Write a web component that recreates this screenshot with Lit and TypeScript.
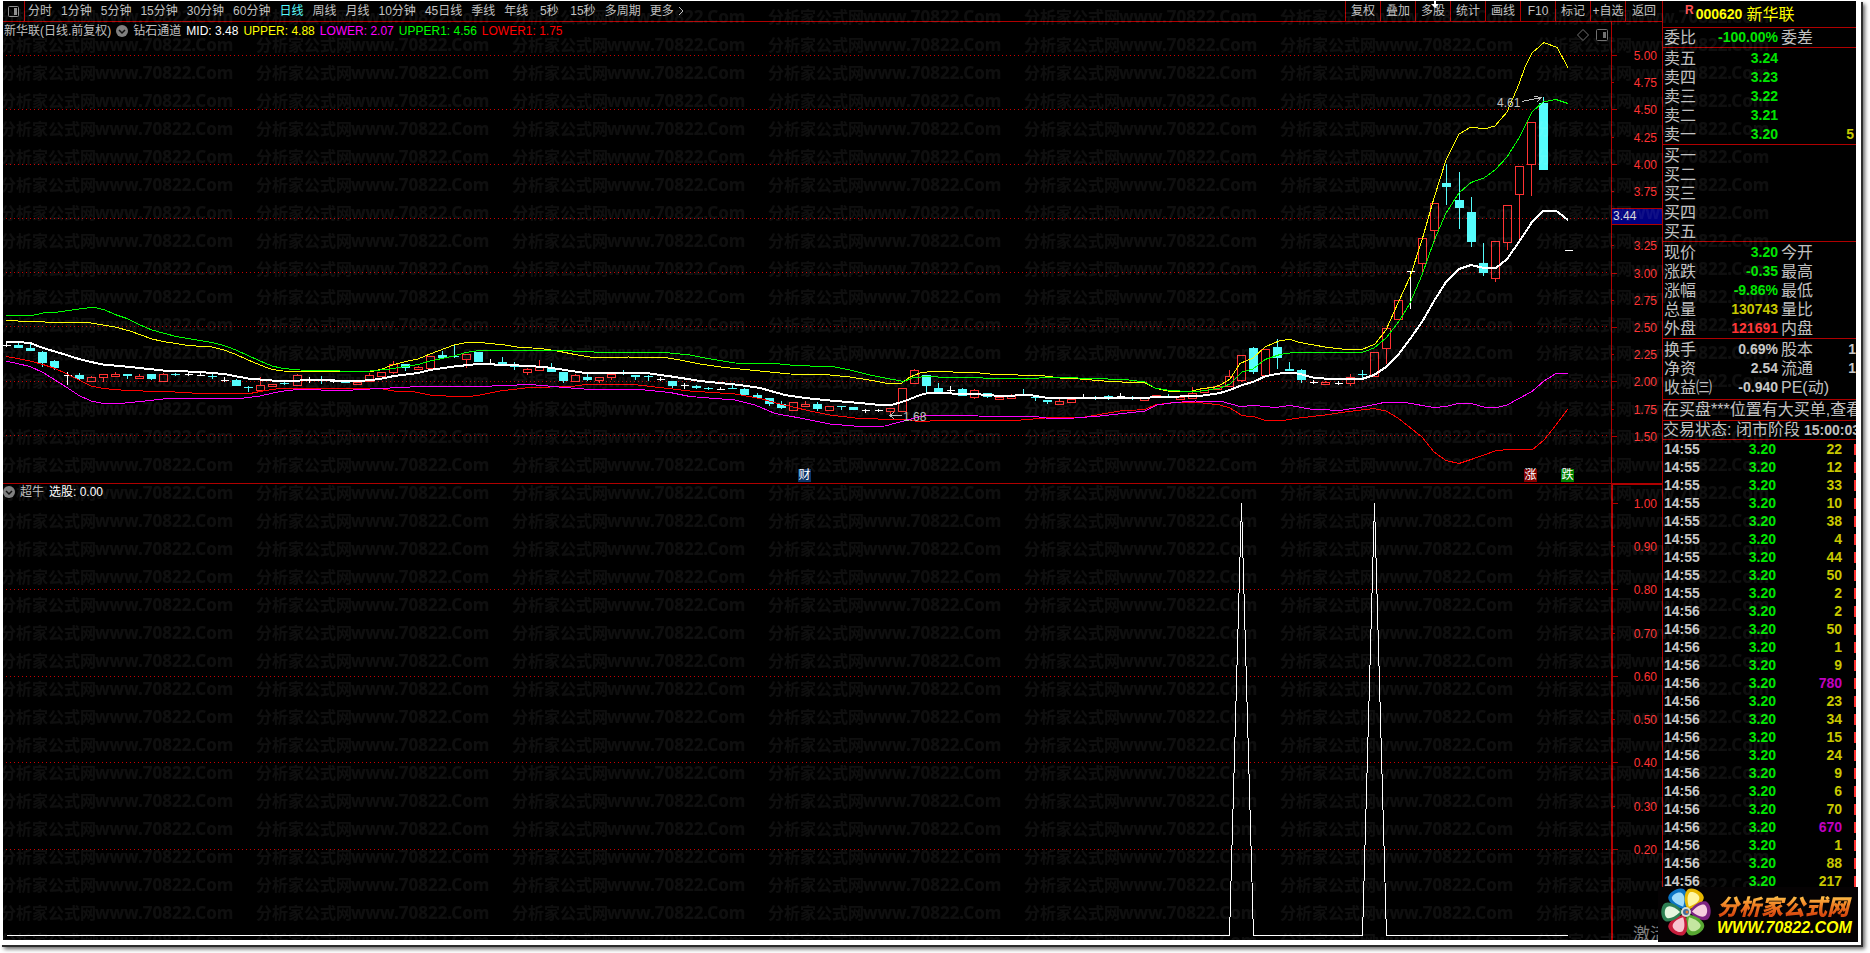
import { LitElement, html, svg, css } from "lit";
import { customElement } from "lit/decorators.js";
import { styleMap } from "lit/directives/style-map.js";
import { classMap } from "lit/directives/class-map.js";

/* Price pane drawing space: x 3..1611, y 22..483. Indicator pane: y 484..940. */
const X0 = 3;
const W = 1608;
const PRICE_TOP = 22;
const PRICE_H = 461;
const IND_TOP = 484;
const IND_H = 456;

const barX = (i: number) => Math.round(6 + 12.105 * i) + 0.5;

/* [bar, kind, high, bodyTop, bodyBottom, low]; kind: r rising, c falling, w unchanged */
type Bar = [number, "r" | "c" | "w", number, number, number, number];
const BARS: Bar[] = [
  [0, "w", 341, 345, 345, 347], [1, "c", 343, 345, 348, 348], [2, "c", 344, 348, 351, 351],
  [3, "c", 351, 352, 363, 367], [4, "c", 360, 361, 368, 370], [5, "w", 372, 375, 375, 385],
  [6, "c", 373, 375, 379, 381], [7, "r", 376, 377, 381, 381], [8, "r", 374, 374, 377, 382],
  [9, "r", 372, 374, 376, 377], [10, "c", 374, 374, 376, 379], [11, "r", 374, 376, 378, 379],
  [12, "c", 374, 374, 379, 380], [13, "r", 373, 374, 381, 381], [14, "c", 373, 374, 375, 376],
  [15, "w", 371, 374, 374, 376], [16, "w", 372, 375, 375, 376], [17, "c", 373, 376, 377, 379],
  [18, "w", 377, 380, 380, 382], [19, "c", 379, 380, 386, 386], [20, "c", 386, 387, 388, 392],
  [21, "r", 377, 385, 390, 390], [22, "r", 384, 384, 386, 387], [23, "c", 381, 383, 384, 385],
  [24, "r", 374, 375, 385, 386], [25, "w", 377, 379, 379, 383], [26, "c", 376, 380, 381, 384],
  [27, "w", 380, 381, 381, 383], [28, "c", 382, 382, 383, 383], [29, "r", 382, 382, 384, 385],
  [30, "r", 373, 375, 381, 381], [31, "r", 372, 372, 376, 376], [32, "r", 361, 364, 372, 374],
  [33, "c", 364, 364, 368, 371], [34, "r", 366, 367, 369, 369], [35, "r", 356, 356, 368, 368],
  [36, "c", 351, 355, 358, 358], [37, "c", 345, 356, 357, 358], [38, "r", 354, 354, 359, 368],
  [39, "c", 352, 352, 362, 362], [40, "w", 359, 363, 363, 365], [41, "c", 357, 362, 364, 364],
  [42, "c", 362, 366, 367, 370], [43, "r", 368, 369, 372, 375], [44, "r", 360, 366, 370, 370],
  [45, "c", 363, 368, 372, 372], [46, "c", 372, 372, 381, 383], [47, "r", 374, 375, 381, 381],
  [48, "c", 374, 377, 380, 381], [49, "r", 377, 377, 380, 383], [50, "r", 374, 374, 377, 380],
  [51, "c", 370, 373, 374, 375], [52, "c", 375, 375, 377, 380], [53, "c", 375, 376, 377, 381],
  [54, "w", 377, 379, 379, 381], [55, "c", 381, 381, 386, 388], [56, "w", 383, 385, 385, 389],
  [57, "c", 385, 386, 388, 389], [58, "c", 387, 388, 389, 390], [59, "w", 387, 389, 389, 390],
  [60, "c", 385, 388, 389, 389], [61, "c", 388, 389, 395, 396], [62, "c", 393, 395, 398, 399],
  [63, "c", 398, 398, 404, 406], [64, "c", 401, 404, 408, 409], [65, "r", 402, 402, 410, 410],
  [66, "r", 401, 404, 406, 406], [67, "c", 402, 404, 409, 411], [68, "r", 406, 406, 410, 410],
  [69, "c", 406, 406, 407, 410], [70, "c", 407, 407, 410, 410], [71, "w", 409, 410, 410, 413],
  [72, "w", 409, 410, 410, 412], [73, "r", 408, 408, 411, 415], [74, "r", 388, 388, 411, 411],
  [75, "r", 369, 370, 383, 384], [76, "c", 375, 375, 386, 393], [77, "c", 383, 388, 392, 392],
  [78, "w", 386, 390, 390, 393], [79, "c", 388, 389, 396, 396], [80, "r", 389, 390, 397, 399],
  [81, "c", 393, 393, 397, 398], [82, "r", 397, 397, 399, 399], [83, "r", 394, 396, 398, 398],
  [84, "c", 389, 395, 396, 396], [85, "c", 396, 397, 398, 401], [86, "c", 400, 400, 402, 404],
  [87, "r", 399, 401, 404, 404], [88, "r", 398, 399, 402, 402], [89, "w", 394, 397, 397, 398],
  [90, "c", 396, 397, 398, 400], [91, "c", 395, 396, 397, 400], [92, "w", 393, 396, 396, 398],
  [93, "c", 396, 397, 398, 400], [94, "r", 398, 398, 400, 400], [95, "r", 395, 395, 397, 397],
  [96, "c", 394, 396, 397, 398], [97, "r", 397, 397, 399, 399], [98, "r", 387, 393, 398, 398],
  [99, "r", 388, 388, 392, 392], [100, "r", 385, 386, 389, 389], [101, "r", 370, 376, 386, 386],
  [102, "r", 355, 355, 380, 382], [103, "c", 347, 348, 372, 374], [104, "r", 349, 349, 375, 375],
  [105, "c", 339, 347, 358, 369], [106, "c", 362, 369, 371, 371], [107, "c", 369, 370, 380, 383],
  [108, "w", 380, 382, 382, 384], [109, "r", 381, 382, 384, 384], [110, "w", 381, 383, 383, 385],
  [111, "r", 374, 377, 383, 386], [112, "c", 370, 374, 375, 378], [113, "r", 352, 352, 376, 376],
  [114, "r", 328, 328, 348, 364], [115, "r", 300, 300, 319, 319], [116, "w", 271, 271, 271, 309],
  [117, "r", 238, 238, 263, 272], [118, "r", 203, 203, 230, 242], [119, "c", 164, 183, 187, 205],
  [120, "c", 172, 200, 208, 229], [121, "c", 197, 212, 242, 247], [122, "c", 243, 263, 273, 276],
  [123, "r", 241, 241, 278, 282], [124, "r", 205, 205, 242, 250], [125, "r", 166, 166, 194, 240],
  [126, "r", 122, 122, 164, 196], [127, "c", 97, 103, 170, 170], [129, "w", 250, 250, 250, 250],
];

const UPPER =
  "6,320.5 30,321.5 60,322.5 91,323 103,325 115,327 130,331 152,339 163,341.5 176,343.5 188,345.5 212,347 224,350 236,354.5 248,360 260,365 272,369.5 283,371 310,371.5 345,372 370,372 382,369 394,364.5 406,361.5 418,359 430,354 442,349.5 454,345 466,342.5 480,342.5 505,345 517,347 540,348.5 555,350.5 575,354.5 590,357 615,358 628,357 665,357.5 680,360 700,364 725,367.5 745,369.5 770,372 790,374 830,375 850,377 875,381 890,384 902,383 910,377 920,373 930,371.5 975,372.5 990,374 1045,376 1060,378 1080,379 1110,381.5 1145,383 1155,388 1167,391 1190,391.5 1200,389 1215,387 1222,384 1230,379 1240,363.5 1253,358 1265,347 1280,340.5 1290,339.5 1300,342.5 1325,347 1350,350 1362,349.5 1375,344 1386,330 1398,303 1410,277 1422,240 1434,198 1446,160 1459,134 1471,127 1484,129 1495,126 1507,112 1519,84 1525,67 1532,53 1544,42.5 1557,47.5 1568,67.5";
const UPPER1 =
  "6,315.5 32,315.5 43,313 55,312.5 79,309 91,307.5 97,308 105,310 115,314.5 127,318.5 140,325 152,330 176,336.5 212,342.5 224,345.5 236,350 248,355.5 260,361 272,366 283,368.5 300,370 340,371 370,371 390,369 418,364.5 430,361 454,356 466,352.5 480,350.5 565,350.5 578,351.5 610,352.5 665,352.5 690,355 705,358 735,363 775,363.5 790,365 810,366 835,367 850,370 870,375 890,379 904,381.5 912,378 925,376.5 950,377.5 1015,378.5 1065,377.5 1090,378.5 1125,379.5 1145,382 1155,388 1167,390 1193,392 1205,390.5 1220,388 1230,384 1242,372 1253,369 1265,359.5 1280,354.5 1290,353 1310,352.5 1362,352.5 1374,348 1386,338 1400,320 1410,303 1422,275 1434,241 1446,213 1459,193 1471,182.5 1484,178 1495,170 1507,157 1519,138 1532,112 1543,102 1556,99.5 1568,103.5";
const MID =
  "6,342 18,342 30,343 43,348 60,353 79,359 91,362 103,364.5 130,367 163,370.5 200,372 224,374 248,378.5 272,380.5 290,381 310,380 360,381 380,379 394,376 418,373 430,370 454,366.5 478,364 510,365 545,367 565,370 585,373 650,373.5 675,377 700,381 740,385 760,388 785,395 805,398 830,400.5 860,403 880,405 893,404.5 905,401 920,395 928,393 975,394 1000,396 1030,395 1048,398 1140,398 1160,397 1200,396 1220,393 1230,390 1242,385 1253,382 1266,376 1280,373.5 1290,372.5 1300,374 1313,377.5 1330,379 1362,379 1374,375 1386,367 1398,355 1410,339 1422,322 1434,301 1446,282 1459,269 1471,265 1484,268 1496,268 1507,259 1519,242 1532,222 1543,211 1557,211.5 1568,220";
const LOWER1 =
  "6,356.5 18,358.5 30,361 43,364.5 55,368.5 67,374 91,386 103,388.5 127,390.5 175,392 200,393.5 250,393.5 265,390.5 280,388.5 380,388.5 394,391 415,392 430,395 454,396.5 470,396.5 480,395 500,391 525,388 575,386 590,384 630,384 655,387 690,391 735,394 760,398.5 780,404 810,411 830,415 855,418 890,419.5 905,419 915,421 930,421 960,420.5 1015,420.5 1045,418 1085,417 1120,411 1145,409.5 1155,405 1170,403 1195,402 1220,405 1230,408 1242,415.5 1255,417 1265,420.5 1280,421 1295,418.5 1325,415 1345,412 1374,408.5 1386,411 1398,418 1422,437 1434,452 1446,460.5 1459,463.5 1471,459.5 1484,455 1495,451 1507,449.5 1532,450 1544,440 1556,425 1568,409";
const LOWER =
  "6,361 30,366.5 43,372.5 67,387.5 79,395.5 91,401 103,403.5 120,403.5 145,401 163,399 240,398.5 260,396 280,391.5 297,389.5 345,390.5 370,389 400,387.5 420,386.5 470,387 480,386.5 530,384.5 565,387.5 590,389.5 640,389.5 670,392.5 690,396.5 735,400 755,405 775,413.5 800,418 830,424 860,426.5 885,426 900,422 915,418 925,415.5 965,415.5 1005,417 1035,416.5 1050,418.5 1075,418 1100,416 1145,411 1157,405 1175,402.5 1195,401 1222,401.5 1240,406.5 1255,405.5 1275,407.5 1290,405.5 1310,409 1340,410.5 1362,407 1384,402.5 1405,402.5 1434,407.5 1446,406.5 1458,403.5 1471,403.5 1484,407 1497,407.5 1507,405 1519,398.5 1532,391.5 1544,381 1556,373.5 1568,373.5";
const SIGNAL = "7,935.5 1229.5,935.5 1241.5,503 1253.5,935.5 1362.5,935.5 1374.5,503 1386.5,935.5 1568,935.5";

const PERIODS = ["分时", "1分钟", "5分钟", "15分钟", "30分钟", "60分钟", "日线", "周线", "月线", "10分钟", "45日线", "季线", "年线", "5秒", "15秒", "多周期"];
const TOOLS = ["复权", "叠加", "多股", "统计", "画线", "F10", "标记", "+自选", "返回"];
const PRICE_LABELS = ["5.00", "4.75", "4.50", "4.25", "4.00", "3.75", "", "3.25", "3.00", "2.75", "2.50", "2.25", "2.00", "1.75", "1.50"];
const IND_LABELS = ["1.00", "0.90", "0.80", "0.70", "0.60", "0.50", "0.40", "0.30", "0.20"];
const PRICE_GRID = [55, 109, 164, 218, 272, 326, 381, 435];
const IND_GRID = [589, 676, 762, 849];

/* [label, value, tone, second label, second value, tone] */
type Quote = [string, string, string, string, string, string];
const ASKS: Quote[] = [
  ["卖五", "3.24", "down", "", "", ""], ["卖四", "3.23", "down", "", "", ""], ["卖三", "3.22", "down", "", "", ""],
  ["卖二", "3.21", "down", "", "", ""], ["卖一", "3.20", "down", "", "5", "vol"],
];
const BIDS: Quote[] = ["买一", "买二", "买三", "买四", "买五"].map((t) => [t, "", "", "", "", ""] as Quote);
const STATS: Quote[] = [
  ["现价", "3.20", "down", "今开", "", ""], ["涨跌", "-0.35", "down", "最高", "", ""], ["涨幅", "-9.86%", "down", "最低", "", ""],
  ["总量", "130743", "vol", "量比", "", ""], ["外盘", "121691", "up", "内盘", "", ""],
];
const BASICS: Quote[] = [
  ["换手", "0.69%", "plain", "股本", "1", "cut"], ["净资", "2.54", "plain", "流通", "1", "cut"], ["收益㈢", "-0.940", "plain", "PE(动)", "", ""],
];
const VOLUMES = [22, 12, 33, 10, 38, 4, 44, 50, 2, 2, 50, 1, 9, 780, 23, 34, 15, 24, 9, 6, 70, 670, 1, 88, 217];

const at = (x: number, y: number, top: number, h: number) =>
  styleMap({ left: `${((x - X0) / W) * 100}%`, top: `${((y - top) / h) * 100}%` });

@customElement("app-root")
export class AppRoot extends LitElement {
  static styles = css`
    :host {
      display: block;
      min-height: 100vh;
      background: #fff;
      color: #c0c0c0;
      font: 12px/14px "Liberation Sans", "Noto Sans CJK SC", sans-serif;
      --line: #b00000;
      --red: #ff3232;
      --green: #00ff00;
    }
    * { box-sizing: border-box; }
    button { font: inherit; color: inherit; background: none; border: 0; padding: 0; margin: 0; cursor: pointer; white-space: nowrap; }
    .page { height: 100vh; min-height: 953px; padding: 0 9px 8px 0; overflow: hidden; }
    .window {
      height: 100%; padding: 1px 5px 5px 3px; background: #fff; position: relative;
      box-shadow: 2px 2px 0 #2c2c2c, 4px 4px 4px #666;
    }
    .desk { height: 100%; display: flex; background: #000; overflow: hidden; position: relative; }
    .left { flex: 1; min-width: 0; display: flex; flex-direction: column; }

    .toolbar { height: 21px; flex: none; display: flex; border-bottom: 1px solid var(--line); }
    .layout { width: 22px; border-right: 1px solid var(--line); display: flex; align-items: center; justify-content: center; }
    .periods { flex: 1; display: flex; align-items: center; gap: 9px; padding-left: 3px; min-width: 0; overflow: hidden; }
    .periods button { min-width: 24px; text-align: center; }
    .periods .on { color: #54fcfc; }
    .more { display: flex; align-items: center; gap: 4px; }
    .tools { display: flex; }
    .tools button { width: 35px; border-left: 1px solid var(--line); }
    .tools button:last-child { width: 37px; }

    .charts { flex: 1; min-height: 0; display: grid; grid-template: 461fr 457fr / 1fr 51px; }
    .pane { display: grid; position: relative; min-width: 0; min-height: 0; overflow: hidden; }
    .pane > svg, .pane > .legend { grid-area: 1 / 1; }
    .pane > svg { width: 100%; height: 100%; display: block; }
    .lower { border-top: 1px solid var(--line); }
    .legend { height: 18px; display: flex; align-items: center; gap: 5px; padding: 0 3px 0 1px; white-space: nowrap; z-index: 1; }
    .lower .legend { padding-left: 0; height: 16px; }
    .push { margin-left: auto; display: flex; gap: 7px; align-items: center; margin-top: 7px; }
    .white { color: #fff; } .yellow { color: #ff0; } .magenta { color: #f0f; } .green { color: #0f0; } .red { color: #f00; }
    .note { position: absolute; line-height: 12px; }
    .badge { position: absolute; width: 13px; height: 13px; line-height: 13px; text-align: center; color: #fff; }
    .navy { background: #0a3468; } .maroon { background: #800000; } .forest { background: #008000; }

    .axis { list-style: none; margin: 0; border-left: 1px solid var(--line); padding: 27px 0 26px; display: flex; flex-direction: column; color: var(--red); position: relative; overflow: hidden; }
    .axis li { flex: 1; min-height: 0; display: flex; justify-content: space-between; padding-right: 5px; }
    .axis li::before { content: ""; width: 2px; height: 1px; margin-top: 6px; background: var(--line); }
    .axis li:nth-child(odd)::before { width: 5px; }
    .axis.ind { border-left-width: 2px; border-top: 2px solid var(--line); padding: 12px 0 54px; }
    .tag { position: absolute; left: 0; right: 0; height: 17px; padding-left: 1px; line-height: 15px; color: #d8d8d8; background: #000080; border: solid var(--line); border-width: 1px 0; }
    .hint { position: absolute; left: 20px; bottom: -5px; font-size: 17px; line-height: 20px; color: #808080; white-space: nowrap; }

    .quote { width: 194px; flex: none; border-left: 1px solid var(--line); overflow: hidden; font-size: 16px; line-height: 19px; }
    .head { height: 27px; display: flex; align-items: center; margin: 0; padding: 0 0 0 22px; border-bottom: 1px solid var(--line); color: #ff0; font-size: 16px; font-weight: 400; }
    .head b { font-size: 14px; margin: 0 4px 0 2px; }
    .head sup { font: bold 12px/12px "Liberation Sans", sans-serif; color: #ff5050; align-self: flex-start; margin-top: 3px; }
    .block { border-bottom: 1px solid var(--line); padding-top: 1px; }
    .block.ratio { padding-top: 0; }
    .block.basics { padding-bottom: 2px; }
    table { width: 193px; table-layout: fixed; border-collapse: collapse; }
    th, td { padding: 0; height: 19px; font-weight: 400; text-align: left; white-space: nowrap; vertical-align: middle; }
    th { padding-left: 1px; }
    th.second { padding-left: 3px; }
    .num { font-size: 14px; font-weight: 700; text-align: right; }
    .c1 { width: 52px; } .c2 { width: 63px; } .c3 { width: 50px; }
    .last { padding-right: 2px; }
    .down { color: #00e600; } .up { color: var(--red); } .vol { color: #c8c800; } .big { color: #c000c0; } .plain { color: #c8c8c8; }
    .cut { padding-right: 0; color: #c8c8c8; }
    .line { margin: 0; white-space: nowrap; overflow: hidden; border-bottom: 1px solid var(--line); line-height: 20px; height: 21px; }
    .line.state { height: 19px; line-height: 18px; }
    .line b { font-size: 14px; margin-left: 4px; }
    .ticks td { height: 18px; line-height: 18px; }
    .ticks .t1 { width: 50px; } .ticks .t2 { width: 63px; } .ticks .t3 { width: 66px; }
    .ticks .time { color: #c8c8c8; text-align: left; padding-left: 1px; }
    .mark::before { content: ""; display: block; width: 2px; height: 11px; margin-left: auto; background: var(--red); }

    .watermark { position: absolute; inset: 0 64px 0 0; width: calc(100% - 64px); height: 100%; pointer-events: none; }
    .watermark text { fill: #fff; fill-opacity: 0.06; }
    .wm-cn { font: bold 16px "Noto Sans CJK SC", sans-serif; }
    .wm-en { font: bold 17px "Noto Sans", sans-serif; }
    .cursor { position: absolute; left: 1428px; top: 0; }

    .brand { position: absolute; right: 3px; bottom: 3px; width: 200px; height: 55px; background: #050203; display: flex; text-decoration: none; }
    .brand svg { flex: none; }
    .words { padding: 4px 0 0 3px; white-space: nowrap; }
    .cn { display: block; font: italic 900 22px/28px "Noto Sans CJK SC", sans-serif; color: transparent; background: linear-gradient(#ffc04a 20%, #f08024 50%, #d84a10 85%); background-clip: text; -webkit-background-clip: text; }
    .en { display: block; font: italic bold 16px/18px "Liberation Sans", sans-serif; color: #ff0; }
  `;

  private bar([i, kind, high, top, bottom, low]: Bar) {
    const x = barX(i);
    if (kind === "w") {
      return svg`<path d="M${x - 4} ${top + 0.5}h8M${x} ${high}V${low}" stroke="#fff"></path>`;
    }
    if (kind === "c") {
      return svg`<path d="M${x} ${high}V${low}" stroke="#54fcfc"></path>
        <rect x=${x - 4.5} y=${top} width="9" height=${Math.max(1, bottom - top)} fill="#54fcfc"></rect>`;
    }
    return svg`<path d="M${x} ${high}V${top}M${x} ${bottom}V${low}" stroke="#ff3232"></path>
      <rect x=${x - 4} y=${top + 0.5} width="8" height=${Math.max(1, bottom - top)} stroke="#ff3232" fill="none"></rect>`;
  }

  private grid(rows: number[]) {
    return rows.map((y) => svg`<path d="M6 ${y + 0.5}H1608" stroke="#c80000" stroke-dasharray="1 3"></path>`);
  }

  private dropIcon() {
    return html`<svg width="12" height="12" viewBox="0 0 12 12" aria-hidden="true"><circle cx="6" cy="6" r="6" fill="#808080"></circle><path d="M3 5l3 3 3-3" fill="none" stroke="#101010" stroke-width="1.5"></path></svg>`;
  }

  private quotes(rows: Quote[], extra = "") {
    return html`<div class="block ${extra}"><table>
      <colgroup><col class="c1" /><col class="c2" /><col class="c3" /><col /></colgroup>
      ${rows.map(([a, v, tone, b, v2, tone2]) => html`<tr>
        <th scope="row">${a}</th><td class="num ${tone}">${v}</td>
        <th class="second">${b}</th><td class="num last ${tone2}">${v2}</td></tr>`)}
    </table></div>`;
  }

  private petal(angle: number, rim: string, body: string) {
    return svg`<g transform="rotate(${angle} 28 25)">
      <path d="M28 22C21 17 17 9 19 4C22-1 34-1 37 4C39 9 35 17 28 22Z" fill=${rim}></path>
      <path d="M28 19C23 14 21 9 22 6C24 3 31 3 33 6C35 9 33 14 28 19Z" fill=${body}></path></g>`;
  }

  render() {
    return html`<div class="page"><main class="window"><div class="desk">
      <section class="left">
        <header class="toolbar">
          <button class="layout" aria-label="布局"><svg width="11" height="11" viewBox="0 0 11 11"><rect x=".5" y=".5" width="10" height="10" rx="1" fill="none" stroke="#909090"></rect><rect x="6" y="2" width="3" height="7" fill="#909090"></rect></svg></button>
          <nav class="periods">
            ${PERIODS.map((p) => html`<button class=${classMap({ on: p === "日线" })}>${p}</button>`)}
            <button class="more">更多<svg width="6" height="10" viewBox="0 0 6 10" aria-hidden="true"><path d="M1 1l4 4-4 4" fill="none" stroke="#c0c0c0"></path></svg></button>
          </nav>
          <div class="tools">${TOOLS.map((t) => html`<button>${t}</button>`)}</div>
        </header>
        <div class="charts">
          <div class="pane">
            <svg viewBox="${X0} ${PRICE_TOP} ${W} ${PRICE_H}" preserveAspectRatio="none" shape-rendering="crispEdges" fill="none">
              ${this.grid(PRICE_GRID)}
              ${BARS.map((b) => this.bar(b))}
              <polyline points=${UPPER} stroke="#ff0"></polyline>
              <polyline points=${UPPER1} stroke="#0f0"></polyline>
              <polyline points=${LOWER1} stroke="#f00"></polyline>
              <polyline points=${LOWER} stroke="#f0f"></polyline>
              <polyline points=${MID} stroke="#fff" stroke-width="2"></polyline>
              <path d="M1522 101.5L1541 97.5M1534 96.5L1541 97.5L1537 102" stroke="#c0c0c0"></path>
              <path d="M902 415.5H890M894 412L890 415.5L894 419" stroke="#c0c0c0"></path>
            </svg>
            <div class="legend">
              <span>新华联(日线.前复权)</span>${this.dropIcon()}<span>钻石通道</span>
              <span class="white">MID: 3.48</span><span class="yellow">UPPER: 4.88</span><span class="magenta">LOWER: 2.07</span><span class="green">UPPER1: 4.56</span><span class="red">LOWER1: 1.75</span>
              <span class="push" aria-hidden="true">
                <svg width="12" height="12" viewBox="0 0 12 12"><path d="M6 .5L11.5 6 6 11.5.5 6z" fill="none" stroke="#707070"></path></svg>
                <svg width="12" height="12" viewBox="0 0 12 12"><rect x=".5" y=".5" width="11" height="11" rx="1" fill="none" stroke="#707070"></rect><rect x="7" y="3" width="3" height="6" fill="#707070"></rect></svg>
              </span>
            </div>
            <span class="note" style=${at(1497, 97, PRICE_TOP, PRICE_H)}>4.61</span>
            <span class="note" style=${at(903, 411, PRICE_TOP, PRICE_H)}>1.68</span>
            <span class="badge navy" style=${at(798, 469, PRICE_TOP, PRICE_H)}>财</span>
            <span class="badge maroon" style=${at(1524, 469, PRICE_TOP, PRICE_H)}>涨</span>
            <span class="badge forest" style=${at(1561, 469, PRICE_TOP, PRICE_H)}>跌</span>
          </div>
          <ul class="axis">
            ${PRICE_LABELS.map((l) => html`<li>${l}</li>`)}
            <span class="tag" style=${styleMap({ top: `${((208 - PRICE_TOP) / PRICE_H) * 100}%` })}>3.44</span>
          </ul>
          <div class="pane lower">
            <svg viewBox="${X0} ${IND_TOP} ${W} ${IND_H}" preserveAspectRatio="none" shape-rendering="crispEdges" fill="none">
              ${this.grid(IND_GRID)}
              <polyline points=${SIGNAL} stroke="#fff"></polyline>
            </svg>
            <div class="legend">${this.dropIcon()}<span>超牛</span><span class="white">选股: 0.00</span></div>
          </div>
          <ul class="axis ind">
            ${IND_LABELS.map((l) => html`<li>${l}</li>`)}
            <span class="hint">激活</span>
          </ul>
        </div>
      </section>
      <aside class="quote">
        <h1 class="head"><sup>R</sup><b>000620</b>新华联</h1>
        ${this.quotes([["委比", "-100.00%", "down", "委差", "", ""]], "ratio")}
        ${this.quotes(ASKS)} ${this.quotes(BIDS)} ${this.quotes(STATS)} ${this.quotes(BASICS, "basics")}
        <p class="line">在买盘***位置有大买单,查看</p>
        <p class="line state">交易状态: 闭市阶段<b>15:00:03</b></p>
        <table class="ticks">
          <colgroup><col class="t1" /><col class="t2" /><col class="t3" /><col /></colgroup>
          ${VOLUMES.map((v, i) => html`<tr><td class="num time">${i < 9 ? "14:55" : "14:56"}</td><td class="num down">3.20</td>
            <td class="num ${v > 500 ? "big" : "vol"}">${v}</td><td class="mark"></td></tr>`)}
        </table>
      </aside>
      <svg class="watermark" aria-hidden="true">
        <defs><pattern id="wm" x="-3" width="256" height="28" patternUnits="userSpaceOnUse">
          <text class="wm-cn" x="0" y="22">分析家公式网</text><text class="wm-en" x="95" y="22">www.70822.Com</text>
        </pattern></defs>
        <rect width="100%" height="100%" fill="url(#wm)"></rect>
      </svg>
      <svg class="cursor" width="8" height="8" viewBox="0 0 8 8" aria-hidden="true"><path d="M3 0h2v3h3L4 7 0 3h3z" fill="#fff"></path></svg>
      </div>
      <a class="brand" href="#home">
        <svg width="56" height="55" viewBox="0 0 56 55" aria-hidden="true">
          ${this.petal(-28, "#0a74c4", "#9fdcfa")}
          ${this.petal(28, "#e8b800", "#fff6a0")}
          ${this.petal(86, "#7c2382", "#f6cfe0")}
          ${this.petal(150, "#58a832", "#c4e6a0")}
          ${this.petal(208, "#c81e3c", "#f8c4d0")}
          ${this.petal(270, "#2e8054", "#e6f6e0")}
          <circle cx="28" cy="25" r="5" fill="#d8dcd0"></circle><circle cx="28" cy="25" r="3" fill="#3c6ca0"></circle><circle cx="29" cy="25" r="1.5" fill="#e08030"></circle>
        </svg>
        <span class="words"><span class="cn">分析家公式网</span><span class="en">WWW.70822.COM</span></span>
      </a>
    </main></div>`;
  }
}
